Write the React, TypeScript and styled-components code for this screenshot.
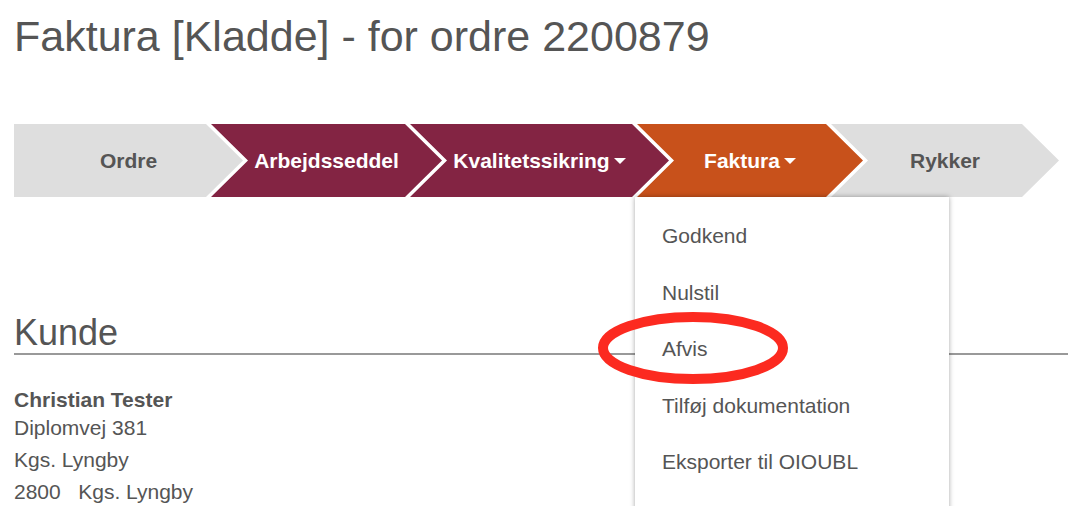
import React from "react";
import styled, { createGlobalStyle } from "styled-components";

const GlobalStyle = createGlobalStyle`
  html, body {
    margin: 0;
    padding: 0;
    background: #ffffff;
  }
  body {
    font-family: "Liberation Sans", Arial, Helvetica, sans-serif;
    color: #555555;
    overflow: hidden;
  }
`;

const Page = styled.div`
  position: relative;
  width: 1068px;
  height: 506px;
  overflow: hidden;
  padding-left: 14px;
  box-sizing: border-box;
`;

const Title = styled.h1`
  margin: 11px 0 0 0;
  font-size: 43px;
  line-height: 50px;
  font-weight: 400;
  color: #555555;
  white-space: nowrap;
`;

const Steps = styled.nav`
  display: flex;
  margin-top: 63px;
  height: 73px;
`;

const Step = styled.div<{ $first?: boolean }>`
  position: relative;
  flex: none;
  margin-left: ${(p) => (p.$first ? "0" : "-32px")};
`;

const StepShape = styled.div<{ $bg: string; $fg: string; $first?: boolean; $w: number }>`
  width: ${(p) => p.$w}px;
  height: 73px;
  display: flex;
  align-items: center;
  justify-content: center;
  background: ${(p) => p.$bg};
  color: ${(p) => p.$fg};
  font-size: 21px;
  font-weight: 700;
  clip-path: ${(p) =>
    p.$first
      ? `polygon(0 0, ${p.$w - 37}px 0, ${p.$w}px 36.5px, ${p.$w - 37}px 73px, 0 73px)`
      : `polygon(0 0, ${p.$w - 37}px 0, ${p.$w}px 36.5px, ${p.$w - 37}px 73px, 0 73px, 37px 36.5px)`};
`;

const Caret = styled.span`
  display: inline-block;
  width: 0;
  height: 0;
  margin-left: 4px;
  margin-top: 1px;
  border-top: 6px solid currentColor;
  border-left: 6px solid transparent;
  border-right: 6px solid transparent;
`;

const Menu = styled.ul`
  position: absolute;
  z-index: 10;
  left: -2px;
  top: 73px;
  width: 314px;
  margin: 0;
  padding: 11px 0 40px 0;
  list-style: none;
  background: #ffffff;
  box-shadow: 0 0 5px rgba(0, 0, 0, 0.35);
  box-sizing: border-box;
`;

const MenuItem = styled.li`
  padding-left: 27px;
  height: 56.5px;
  line-height: 56.5px;
  font-size: 21px;
  color: #555555;
  white-space: nowrap;
`;

const SectionTitle = styled.h2`
  margin: 116px 0 0 0;
  font-size: 36px;
  line-height: 40px;
  font-weight: 400;
  color: #555555;
  border-bottom: 2px solid #999999;
  margin-right: -14px;
`;

const Customer = styled.div`
  margin-top: 33px;
  font-size: 21px;
  color: #555555;
`;

const Name = styled.div`
  font-weight: 700;
  line-height: 24px;
`;

const AddressLine = styled.div`
  line-height: 32px;
  white-space: pre;
`;

const Annotation = styled.svg`
  position: absolute;
  z-index: 20;
  left: 598px;
  top: 312px;
  overflow: visible;
`;

type StepData = {
  label: string;
  w: number;
  bg: string;
  fg: string;
  caret?: boolean;
  menu?: string[];
};

const GREY = "#dedede";
const MAROON = "#832443";
const ORANGE = "#c8511b";

const steps: StepData[] = [
  { label: "Ordre", w: 229, bg: GREY, fg: "#555555" },
  { label: "Arbejdsseddel", w: 231, bg: MAROON, fg: "#ffffff" },
  { label: "Kvalitetssikring", w: 259, bg: MAROON, fg: "#ffffff", caret: true },
  {
    label: "Faktura",
    w: 226,
    bg: ORANGE,
    fg: "#ffffff",
    caret: true,
    menu: ["Godkend", "Nulstil", "Afvis", "Tilføj dokumentation", "Eksporter til OIOUBL"],
  },
  { label: "Rykker", w: 228, bg: GREY, fg: "#555555" },
];

export default function App() {
  return (
    <>
      <GlobalStyle />
      <Page>
        <Title>Faktura [Kladde] - for ordre 2200879</Title>
        <Steps>
          {steps.map((s, i) => (
            <Step key={s.label} $first={i === 0}>
              <StepShape $bg={s.bg} $fg={s.fg} $first={i === 0} $w={s.w}>
                {s.label}
                {s.caret && <Caret />}
              </StepShape>
              {s.menu && (
                <Menu>
                  {s.menu.map((m) => (
                    <MenuItem key={m}>{m}</MenuItem>
                  ))}
                </Menu>
              )}
            </Step>
          ))}
        </Steps>
        <SectionTitle>Kunde</SectionTitle>
        <Customer>
          <Name>Christian Tester</Name>
          <AddressLine>Diplomvej 381</AddressLine>
          <AddressLine>Kgs. Lyngby</AddressLine>
          <AddressLine>{"2800   Kgs. Lyngby"}</AddressLine>
        </Customer>
        <Annotation width="190" height="72" viewBox="0 0 190 72">
          <ellipse cx="95" cy="36" rx="90" ry="31" fill="none" stroke="#fc2a20" strokeWidth="10" />
        </Annotation>
      </Page>
    </>
  );
}
